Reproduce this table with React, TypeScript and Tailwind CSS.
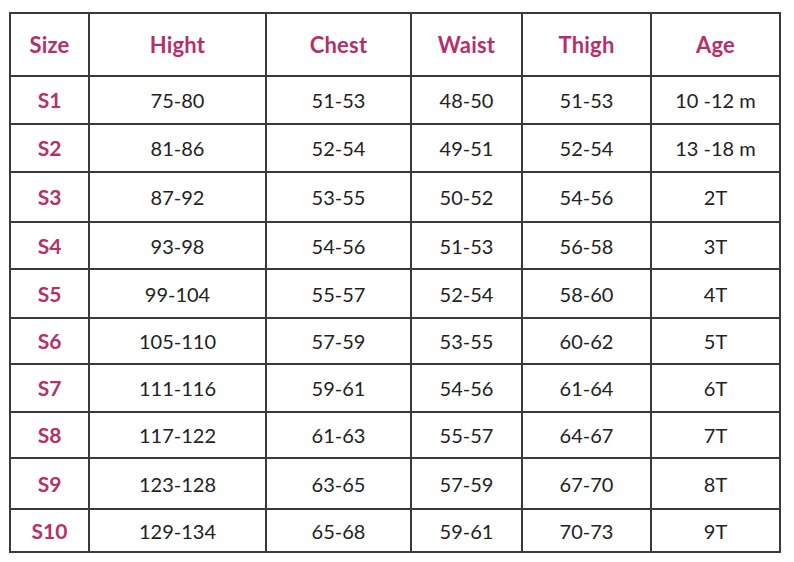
import React from "react";

const headers = ["Size", "Hight", "Chest", "Waist", "Thigh", "Age"];
const widths = ["w-[79px]", "w-[177px]", "w-[145px]", "w-[111px]", "w-[129px]", "w-[129px]"];
const rows: string[][] = [
  ["S1", "75-80", "51-53", "48-50", "51-53", "10 -12 m"],
  ["S2", "81-86", "52-54", "49-51", "52-54", "13 -18 m"],
  ["S3", "87-92", "53-55", "50-52", "54-56", "2T"],
  ["S4", "93-98", "54-56", "51-53", "56-58", "3T"],
  ["S5", "99-104", "55-57", "52-54", "58-60", "4T"],
  ["S6", "105-110", "57-59", "53-55", "60-62", "5T"],
  ["S7", "111-116", "59-61", "54-56", "61-64", "6T"],
  ["S8", "117-122", "61-63", "55-57", "64-67", "7T"],
  ["S9", "123-128", "63-65", "57-59", "67-70", "8T"],
  ["S10", "129-134", "65-68", "59-61", "70-73", "9T"],
];
const heights = [
  "h-[48px]",
  "h-[48px]",
  "h-[50px]",
  "h-[47px]",
  "h-[49px]",
  "h-[46px]",
  "h-[48px]",
  "h-[46px]",
  "h-[51px]",
  "h-[43px]",
];

export default function App() {
  return (
    <div className="w-[794px] h-[562px] bg-white pl-[9px] pt-[12px] font-['Lato','Open_Sans',sans-serif]">
      <table className="border-collapse table-fixed w-[772px]">
        <colgroup>
          {widths.map((w, i) => (
            <col key={i} className={w} />
          ))}
        </colgroup>
        <thead>
          <tr className="h-[63px]">
            {headers.map((h) => (
              <th
                key={h}
                className="border-2 border-[#3a3a3a] text-center align-middle text-[22px] font-bold text-[#b5306a] p-0 tracking-[0.2px]"
              >
                {h}
              </th>
            ))}
          </tr>
        </thead>
        <tbody>
          {rows.map((r, ri) => (
            <tr key={ri} className={heights[ri]}>
              {r.map((c, ci) => (
                <td
                  key={ci}
                  className={
                    ci === 0
                      ? "border-2 border-[#3a3a3a] text-center align-middle text-[21px] font-bold text-[#b5306a] p-0"
                      : "border-2 border-[#3a3a3a] text-center align-middle text-[20px] text-[#222222] p-0"
                  }
                >
                  {c}
                </td>
              ))}
            </tr>
          ))}
        </tbody>
      </table>
    </div>
  );
}
